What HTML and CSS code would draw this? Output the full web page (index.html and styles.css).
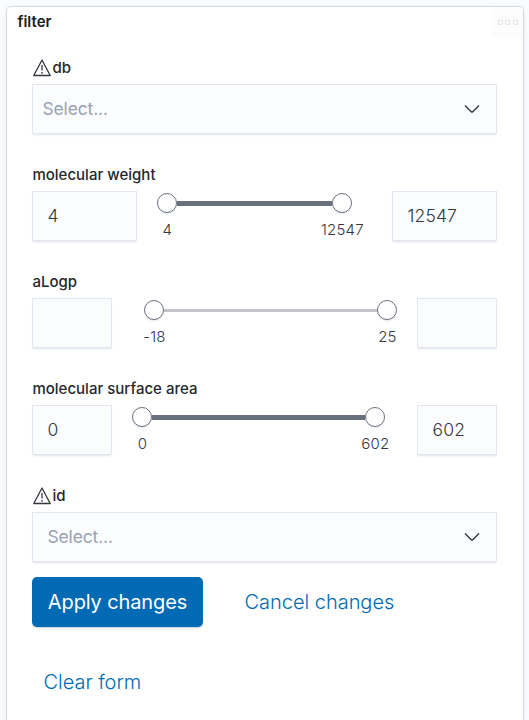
FILE: index.html
```html
<!DOCTYPE html>
<html lang="en">
<head>
<meta charset="utf-8">
<title>filter</title>
<link rel="stylesheet" href="styles.css">
</head>
<body>
<section class="panel">
  <header class="panel-head">
    <h1 class="panel-title">filter</h1>
    <button class="panel-menu" aria-label="Panel options"><i></i><i></i><i></i></button>
  </header>
  <form class="controls">
    <div class="row">
      <div class="label"><svg class="warn" viewBox="0 0 20 20"><path d="M10 2 18.2 17.5H1.8Z"/><path class="mark" d="M10 7v5.5M10 14v1.7"/></svg>db</div>
      <div class="field select">Select...<svg class="chevron" viewBox="0 0 20 20"><path d="M3 6.5 9.2 12.7q.8.8 1.6 0L17 6.5"/></svg></div>
    </div>
    <div class="row">
      <div class="label">molecular weight</div>
      <div class="range">
        <div class="field wide">4</div>
        <div class="slider shift-left">
          <div class="rail"><b class="thumb"></b><span class="track"></span><b class="thumb"></b></div>
          <div class="ticks"><span>4</span><span>12547</span></div>
        </div>
        <div class="field wide">12547</div>
      </div>
    </div>
    <div class="row">
      <div class="label">aLogp</div>
      <div class="range">
        <div class="field"></div>
        <div class="slider shift-right">
          <div class="rail"><b class="thumb"></b><span class="track empty"></span><b class="thumb"></b></div>
          <div class="ticks"><span>-18</span><span>25</span></div>
        </div>
        <div class="field"></div>
      </div>
    </div>
    <div class="row">
      <div class="label">molecular surface area</div>
      <div class="range">
        <div class="field">0</div>
        <div class="slider">
          <div class="rail"><b class="thumb"></b><span class="track"></span><b class="thumb"></b></div>
          <div class="ticks"><span>0</span><span>602</span></div>
        </div>
        <div class="field">602</div>
      </div>
    </div>
    <div class="row">
      <div class="label"><svg class="warn" viewBox="0 0 20 20"><path d="M10 2 18.2 17.5H1.8Z"/><path class="mark" d="M10 7v5.5M10 14v1.7"/></svg>id</div>
      <div class="field select multi">Select...<svg class="chevron" viewBox="0 0 20 20"><path d="M3 6.5 9.2 12.7q.8.8 1.6 0L17 6.5"/></svg></div>
    </div>
    <div class="actions">
      <button type="button" class="btn primary">Apply changes</button>
      <button type="button" class="btn cancel">Cancel changes</button>
      <button type="button" class="btn clear">Clear form</button>
    </div>
  </form>
</section>
</body>
</html>
```
FILE: styles.css
```css
* { box-sizing: border-box; }
body {
  margin: 0;
  height: 720px;
  padding: 6px 5px 0 6px;
  background: #fafbfd;
  font-family: Inter, "Liberation Sans", sans-serif;
  color: #343741;
}
.panel {
  height: 714px;
  background: #fff;
  border: 1px solid #d3dae6;
  border-bottom: 0;
  border-radius: 5px 5px 0 0;
  box-shadow: 0 2px 5px -1px rgba(152, 162, 179, .25);
}
.panel-head {
  display: flex;
  justify-content: space-between;
  height: 30px;
}
.panel-title {
  margin: 0;
  padding-left: 10.5px;
  font-size: 15px;
  line-height: 30px;
  font-weight: 600;
  color: #1a1c21;
}
.panel-menu {
  display: flex;
  align-items: center;
  justify-content: center;
  gap: 2.5px;
  width: 31px;
  height: 30px;
  padding: 0;
  border: 0;
  border-radius: 0 4px 0 5px;
  background: #fcfcfc;
}
.panel-menu i {
  width: 5px;
  height: 5px;
  border: 1px solid #e9e9e9;
}
.controls { padding: 20px 26px 0 25px; }
.row { height: 107px; }
.label {
  display: flex;
  align-items: center;
  height: 27px;
  padding-bottom: 7px;
  padding-left: .4px;
  font-size: 15px;
  font-weight: 550;
  letter-spacing: .01px;
  color: #25272d;
}
.warn {
  width: 20px;
  height: 20px;
  margin-top: 1px;
  fill: none;
  stroke: #343741;
  stroke-width: 1.3;
  stroke-linejoin: round;
}
.field {
  flex: none;
  width: 80px;
  height: 50px;
  padding: 0 14.5px;
  border: 1px solid #e3e5f0;
  background: #fbfcfd;
  box-shadow: 0 2px 2px -1px rgba(152, 162, 179, .3);
  font-size: 17.5px;
  font-weight: 350;
  letter-spacing: .15px;
  line-height: 48px;
}
.wide { width: 105px; }
.select {
  display: flex;
  align-items: center;
  justify-content: space-between;
  width: 100%;
  padding: 0 14px 0 9.5px;
  font-weight: 400;
  letter-spacing: -.16px;
  color: #98a2b3;
}
.multi { padding-left: 14.5px; }
.chevron {
  width: 20px;
  height: 20px;
  fill: none;
  stroke: #343741;
  stroke-width: 1.4;
}
.range { display: flex; margin-left: 0; }
.slider { flex: 1; margin: 2px 32px 0 20px; }
.shift-left { margin-right: 40px; }
.shift-right { margin: 2px 20px 0 32px; }
.rail { display: flex; align-items: center; }
.thumb {
  width: 20px;
  height: 20px;
  border: 1px solid #69707d;
  border-radius: 50%;
  background: #fff;
  box-shadow: 0 2px 2px -1px rgba(152, 162, 179, .3);
}
.track { flex: 1; height: 5px; background: #69707d; }
.empty { height: 3px; background: #c2c5ca; }
.ticks {
  display: flex;
  justify-content: space-between;
  padding: 7px 9.6px 0 10.4px;
  font-size: 15px;
  font-weight: 300;
  letter-spacing: .2px;
  line-height: 20px;
}
.ticks span {
  display: flex;
  justify-content: center;
  width: 0;
}
.actions {
  display: flex;
  flex-wrap: wrap;
  gap: 30px;
  margin-top: -15px;
}
.btn {
  height: 50px;
  padding: 0 11.5px;
  border: 0;
  border-radius: 5px;
  background: none;
  font-family: inherit;
  font-size: 20px;
  font-weight: 350;
  letter-spacing: -.02px;
  color: #006bb4;
}
.primary {
  width: 171px;
  background: #006bb4;
  color: #fff;
  font-weight: 400;
  letter-spacing: -.12px;
  box-shadow: 0 2px 2px -1px rgba(54, 97, 126, .3);
}
```
